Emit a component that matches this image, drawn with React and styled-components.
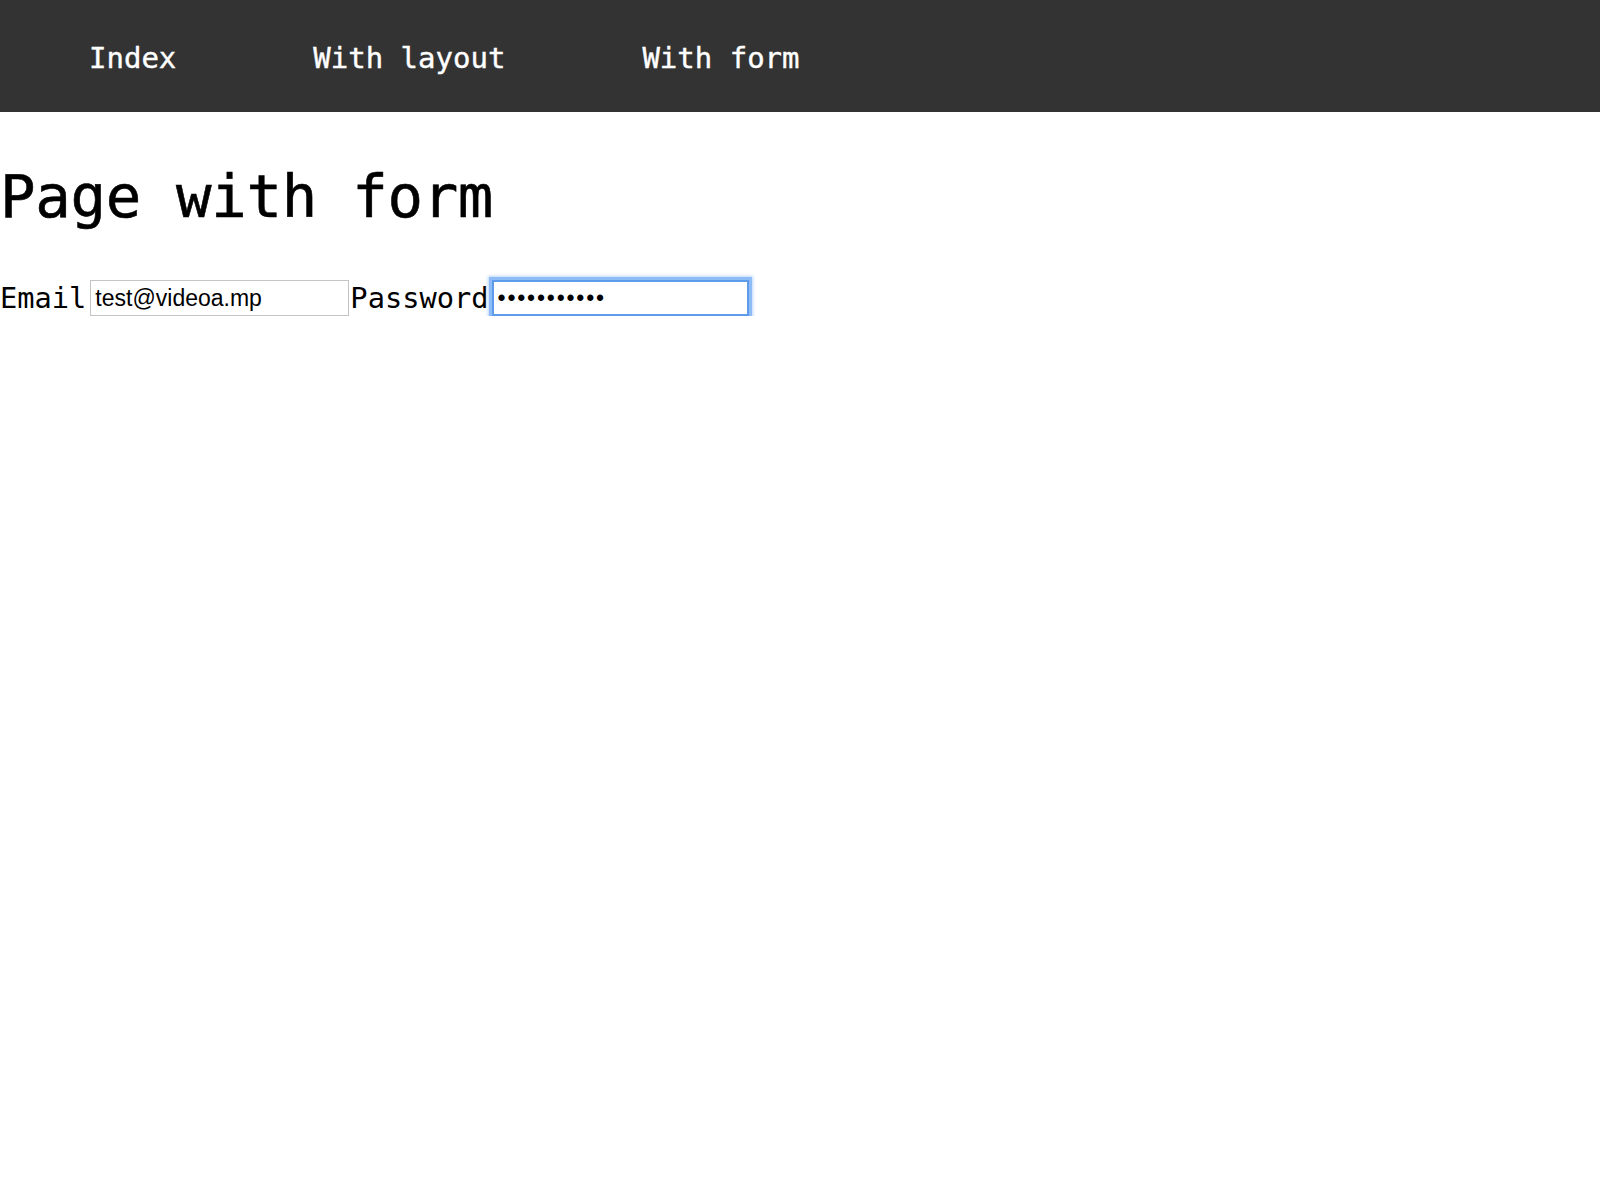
import React from "react";
import styled, { createGlobalStyle } from "styled-components";

const GlobalStyle = createGlobalStyle`
  html, body {
    margin: 0;
    padding: 0;
    background: #fff;
  }
  body {
    font-family: "DejaVu Sans Mono", "Liberation Mono", monospace;
    color: #000;
  }
`;

const links = ["Index", "With layout", "With form"];

const App = () => {
  return (
    <>
      <GlobalStyle />
      <Header>
        <Nav>
          {links.map((label) => (
            <NavLink key={label} href="#">
              {label}
            </NavLink>
          ))}
        </Nav>
      </Header>
      <Main>
        <Title>Page with form</Title>
        <Form onSubmit={(e) => e.preventDefault()}>
          <Label htmlFor="email">Email</Label>
          <Input id="email" type="email" defaultValue="test@videoa.mp" />
          <Label htmlFor="password">Password</Label>
          <Input
            id="password"
            type="password"
            defaultValue="secretpassw"
            focused
          />
        </Form>
      </Main>
    </>
  );
};

const Header = styled.header`
  height: 112px;
  background: #333333;
  display: flex;
  align-items: center;
`;

const Nav = styled.nav`
  display: flex;
  align-items: center;
  gap: 137px;
  padding: 4px 0 0 89px;
`;

const NavLink = styled.a`
  color: #fff;
  text-decoration: none;
  font-size: 29px;
  line-height: 1;
  -webkit-text-stroke: 0.4px #fff;
`;

const Main = styled.main`
  padding: 0;
`;

const Title = styled.h1`
  margin: 50px 0 0;
  font-size: 59px;
  font-weight: normal;
  line-height: normal;
  letter-spacing: -0.3px;
  -webkit-text-stroke: 0.6px #000;
`;

const Form = styled.form`
  display: flex;
  align-items: center;
  margin-top: 49px;
`;

const Label = styled.label`
  font-size: 28.7px;
  line-height: 1;
`;

const Input = styled.input`
  box-sizing: border-box;
  width: ${({ focused }) => (focused ? "257px" : "259px")};
  height: 36px;
  margin: 0 ${({ focused }) => (focused ? "3px" : "1px")} 0 ${({ focused }) => (focused ? "3px" : "4px")};
  padding: 0 4px;
  font-family: "Liberation Sans", Arial, sans-serif;
  font-size: 23px;
  letter-spacing: ${({ focused }) => (focused ? "1.8px" : "0")};
  color: #000;
  caret-color: #000;
  background: #fff;
  border: ${({ focused }) => (focused ? "2px solid #5e9bea" : "1px solid #c4c4c4")};
  border-radius: 0;
  box-shadow: ${({ focused }) =>
    focused ? "0 0 0 3px #8fbbf6, 0 0 3px 4px #bcd6fa" : "none"};
  outline: none;
`;

export default App;
